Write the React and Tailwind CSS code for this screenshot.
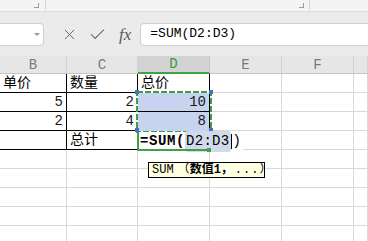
import React from "react";
import { X, Check } from "lucide-react";

const COLS = "grid grid-cols-[67px_71px_72px_72px_72px_1fr]";
const CELL_FONT = { fontFamily: '"Liberation Mono", "Noto Sans CJK SC", monospace' };

const rows = [
  [{ t: "单价" }, { t: "数量" }, { t: "总价" }],
  [{ t: "5", r: true }, { t: "2", r: true }, { t: "10", r: true }],
  [{ t: "2", r: true }, { t: "4", r: true }, { t: "8", r: true }],
  [{ t: "" }, { t: "总计" }, { t: "" }],
  [], [], [], [], [],
];

const Corner = () => (
  <span className="w-[5px] h-[5px] border-r border-b border-[#9a9a9a]" />
);

const App = () => {
  return (
    <div className="w-[368px] h-[241px] overflow-hidden bg-white relative" style={CELL_FONT}>
      {/* ribbon bottom */}
      <div className="h-[12px] bg-[#f4f4f4] border-b border-[#dcdcdc] flex items-start">
        <div className="w-[45px] h-full flex items-center justify-end pr-[6px] pb-[1px]">
          <Corner />
        </div>
        <div className="w-px h-[10px] bg-[#d6d6d6]" />
        <div className="w-[263px] h-full flex items-center justify-end pr-[5px] pb-[1px]">
          <Corner />
        </div>
        <div className="w-px h-[10px] bg-[#d6d6d6]" />
      </div>

      {/* formula bar */}
      <div className="h-[44px] bg-[#ebebeb] flex items-center">
        <div className="-ml-[6px] w-[50px] h-[23px] bg-white border border-[#cfcfcf] rounded-[4px] flex items-center justify-end pr-[3px]">
          <span className="w-0 h-0 border-l-[3px] border-r-[3px] border-t-[3px] border-l-transparent border-r-transparent border-t-[#9a9a9a]" />
        </div>
        <div className="flex items-center ml-[17px] gap-[10px] text-[#5a5a5a]">
          <X size={17} strokeWidth={1.3} />
          <Check size={19} strokeWidth={1.3} />
          <span
            className="text-[17px] italic leading-none ml-[2px]"
            style={{ fontFamily: '"Liberation Serif", serif' }}
          >
            fx
          </span>
        </div>
        <div className="ml-[9px] flex-1 -mr-[6px] h-[23px] bg-white border border-[#cfcfcf] rounded-[4px] flex items-center pl-[9px] text-[13px] text-black">
          =SUM(D2:D3)
        </div>
      </div>

      {/* column headers */}
      <div className={`${COLS} h-[18px] bg-[#e6e6e6] text-[14px] text-[#7a7a7a] leading-none`}>
        {["B", "C", "D", "E", "F", ""].map((c, i) => (
          <div
            key={i}
            className={
              c === "D"
                ? "bg-[#d3d3d3] text-[#2e9b3c] border-b-2 border-[#3da345] border-r border-r-[#c4c4c4] flex items-center justify-center"
                : "border-b border-[#c4c4c4] border-r border-r-[#d2d2d2] flex items-center justify-center"
            }
          >
            {c}
          </div>
        ))}
      </div>

      {/* grid */}
      <div className="relative">
        {rows.map((row, ri) => (
          <div key={ri} className={`${COLS} h-[19px]`}>
            {[0, 1, 2, 3, 4, 5].map((ci) => {
              const cell = row[ci];
              const inTable = ri < 4 && ci < 3;
              return (
                <div
                  key={ci}
                  className={`border-r border-b text-[14px] leading-[18px] px-[3px] whitespace-nowrap overflow-hidden ${
                    inTable ? "border-black" : "border-[#d9d9d9]"
                  } ${cell && cell.r ? "text-right text-[#1a1a1a]" : "text-left text-black"}`}
                >
                  {cell ? cell.t : ""}
                </div>
              );
            })}
          </div>
        ))}

        {/* selection D2:D3 */}
        <div className="absolute left-[138px] top-[19px] w-[71px] h-[38px] bg-[#c7d3ef]" />
        <svg className="absolute left-[136px] top-[17px]" width="76" height="42">
          <rect x="1" y="1" width="74" height="40" fill="none" stroke="#ffffff" strokeWidth="2" />
          <rect x="1" y="1" width="74" height="40" fill="none" stroke="#3f9b46" strokeWidth="2" strokeDasharray="6 2" />
        </svg>
        <span className="absolute left-[135px] top-[16px] w-[4px] h-[4px] bg-[#4472c4]" />
        <span className="absolute left-[209px] top-[16px] w-[4px] h-[4px] bg-[#4472c4]" />
        <span className="absolute left-[135px] top-[54px] w-[4px] h-[4px] bg-[#4472c4]" />
        <span className="absolute left-[209px] top-[54px] w-[4px] h-[4px] bg-[#4472c4]" />
        {/* restore row line inside selection */}
        <div className="absolute left-[138px] top-[37px] w-[71px] h-px bg-black" />
        {/* numbers over the fill */}
        <div className="absolute left-[138px] top-[19px] w-[71px] h-[18px] text-right pr-[3px] text-[14px] leading-[18px] text-[#1a1a1a]">10</div>
        <div className="absolute left-[138px] top-[38px] w-[71px] h-[18px] text-right pr-[3px] text-[14px] leading-[18px] text-[#1a1a1a]">8</div>

        {/* editing cell D4 */}
        <div className="absolute left-[137px] top-[58px] h-[19px] flex items-center bg-white border-l-2 border-[#3da345] pl-[1px] pr-[2px] text-[14px] text-black">
          <span className="font-bold tracking-[0.6px]">=SUM(</span>
          <span className="bg-[#d1d9ea] rounded-[3px] px-[1px] tracking-[0.3px]">D2:D3</span>
          <span className="w-px h-[15px] bg-black" />
          <span className="ml-[1px]">)</span>
        </div>
        <div className="absolute left-[137px] top-[75px] w-[72px] h-[2px] bg-[#3da345]" />
        <span className="absolute left-[207px] top-[74px] w-[4px] h-[4px] bg-[#3da345]" />

        {/* function tip */}
        <div className="absolute left-[148px] top-[88px] w-[117px] h-[16px] bg-[#ffffe1] border border-black flex items-center px-[3px] text-[12px] text-black leading-none whitespace-nowrap">
          <span>SUM</span>
          <span className="ml-[4px]">（</span>
          <span className="font-bold">数值1，</span>
          <span className="ml-[2px] tracking-[1px]">...</span>
          <span>）</span>
        </div>
      </div>
    </div>
  );
};

export default App;
